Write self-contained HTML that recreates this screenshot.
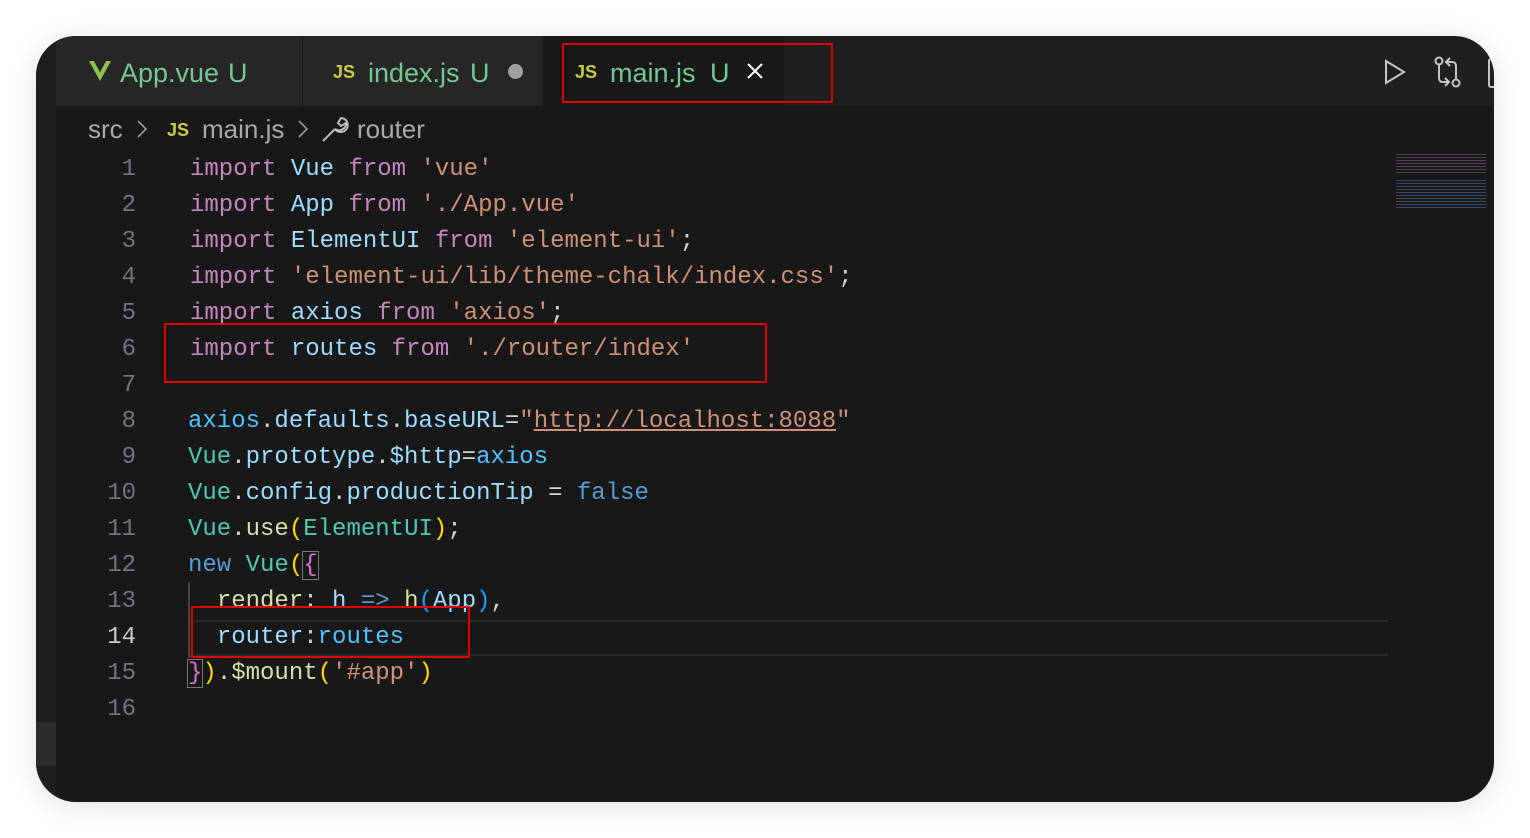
<!DOCTYPE html>
<html><head><style>
body{margin:0;width:1530px;height:838px;background:#fff;overflow:hidden;position:relative;font-family:"Liberation Sans",sans-serif}
.win{position:absolute;left:36px;top:36px;width:1458px;height:766px;background:#181818;border-radius:40px;overflow:hidden;box-shadow:0 4px 30px rgba(0,0,0,.12)}
.tabbar{position:absolute;left:0;top:0;width:1458px;height:70px;background:#1f1f1f}
.tab{position:absolute;top:0;height:70px;background:#262626;border-right:1px solid #1a1a1a;box-sizing:border-box}
.t{position:absolute;font-size:27px;line-height:30px;color:#73c991;white-space:nowrap}
.js{position:absolute;font-family:"Liberation Sans",sans-serif;font-weight:bold;font-size:18px;color:#cbcb41;letter-spacing:0px}
.bc{position:absolute;top:114px;font-size:26px;line-height:30px;color:#a9a9a9;white-space:nowrap}
.mono{font-family:"Liberation Mono",monospace;font-size:24px}
.ln{position:absolute;left:56px;width:80px;text-align:right;color:#6e7681}
.cd{position:absolute;left:190px;white-space:pre;color:#d4d4d4}
.k{color:#c586c0}.v{color:#9cdcfe}.s{color:#ce9178}.c{color:#4ec9b0}.b{color:#569cd6}.y{color:#ffd700}.p{color:#da70d6}.bl{color:#179fff}.f{color:#dcdcaa}.a{color:#4fc1ff}
.red{position:absolute;border:2px solid #e00000;box-sizing:border-box}
.mono > div{margin-top:4px}
</style></head><body>
<div class="win">
<div class="tabbar"></div>
<div style="position:absolute;left:0;top:0;width:20px;height:766px;background:#1e1e1e"></div>
<div style="position:absolute;left:0;top:686px;width:20px;height:44px;background:#2b2b2e"></div>
<div class="tab" style="left:20px;width:247px"></div>
<div class="tab" style="left:267px;width:240px"></div>
<div class="tab" style="left:508px;width:240px;background:#181818"></div>
<svg style="position:absolute;left:1346px;top:22px" width="26" height="28" viewBox="0 0 26 28"><path d="M4 3 L22 14 L4 25 Z" fill="none" stroke="#c5c5c5" stroke-width="2"/></svg>
<svg style="position:absolute;left:1396px;top:20px" width="32" height="32" viewBox="0 0 32 32" fill="none" stroke="#c5c5c5" stroke-width="2"><circle cx="7" cy="5" r="3.5"/><circle cx="24" cy="27" r="3.5"/><path d="M7 9 V22 Q7 26 11 26 H16 M13 22 L17 26 L13 30"/><path d="M24 23 V10 Q24 6 20 6 H15 M18 2 L14 6 L18 10"/></svg>
<div style="position:absolute;left:1452px;top:22px;width:10px;height:26px;border:2px solid #c5c5c5;border-radius:3px"></div>
<div style="position:absolute;left:154px;top:584px;width:1198px;height:32px;border-top:2px solid #282828;border-bottom:2px solid #282828"></div>
<div style="position:absolute;left:152px;top:546px;width:2px;height:76px;background:#444"></div>
<div style="position:absolute;left:1360px;top:116px;width:90px;height:22px;background:repeating-linear-gradient(#181818 0 2px,#7a5a80 2px 3px);opacity:.6"></div>
<div style="position:absolute;left:1360px;top:142px;width:90px;height:32px;background:repeating-linear-gradient(#181818 0 2px,#4a6a90 2px 3px);opacity:.6"></div>
</div>
<svg style="position:absolute;left:88px;top:60px" width="24" height="22" viewBox="0 0 24 22"><path d="M1 1 H6 L12 12 L18 1 H23 L12 21 Z" fill="#8dc149"/><path d="M6 1 H9 L12 7 L15 1 H18 L12 12 Z" fill="#262626"/></svg>
<span class="t" style="left:120px;top:58px">App.vue</span><span class="t" style="left:228px;top:58px">U</span>
<span class="js" style="left:333px;top:62px">JS</span>
<span class="t" style="left:368px;top:58px">index.js</span><span class="t" style="left:470px;top:58px">U</span>
<span style="position:absolute;left:508px;top:64px;width:15px;height:15px;border-radius:50%;background:#a0a0a0"></span>
<span class="js" style="left:575px;top:62px">JS</span>
<span class="t" style="left:610px;top:58px">main.js</span><span class="t" style="left:710px;top:58px">U</span>
<svg style="position:absolute;left:746px;top:62px" width="18" height="18" viewBox="0 0 18 18"><path d="M2 2 L16 16 M16 2 L2 16" stroke="#fff" stroke-width="2"/></svg>
<span class="bc" style="left:88px">src</span>
<svg style="position:absolute;left:136px;top:119px" width="12" height="20" viewBox="0 0 12 20"><path d="M2 2 L10 10 L2 18" fill="none" stroke="#999" stroke-width="1.6"/></svg>
<span class="js" style="left:167px;top:120px">JS</span>
<span class="bc" style="left:202px">main.js</span>
<svg style="position:absolute;left:297px;top:119px" width="12" height="20" viewBox="0 0 12 20"><path d="M2 2 L10 10 L2 18" fill="none" stroke="#999" stroke-width="1.6"/></svg>
<svg style="position:absolute;left:320px;top:114px" width="30" height="30" viewBox="0 0 30 30" fill="none" stroke="#bbb" stroke-width="2"><path d="M3 27 L15 15 M15 15 A7 7 0 1 0 21 4 L18 9 L21 12 L26 9 A7 7 0 0 1 15 15"/></svg>
<span class="bc" style="left:357px">router</span>
<div class="mono">
<div class="ln" style="top:152px">1</div><div class="ln" style="top:188px">2</div><div class="ln" style="top:224px">3</div><div class="ln" style="top:260px">4</div><div class="ln" style="top:296px">5</div><div class="ln" style="top:332px">6</div><div class="ln" style="top:368px">7</div><div class="ln" style="top:404px">8</div><div class="ln" style="top:440px">9</div><div class="ln" style="top:476px">10</div><div class="ln" style="top:512px">11</div><div class="ln" style="top:548px">12</div><div class="ln" style="top:584px">13</div><div class="ln" style="top:620px;color:#ccc">14</div><div class="ln" style="top:656px">15</div><div class="ln" style="top:692px">16</div>
<div class="cd" style="top:152px"><span class="k">import</span> <span class="v">Vue</span> <span class="k">from</span> <span class="s">'vue'</span></div>
<div class="cd" style="top:188px"><span class="k">import</span> <span class="v">App</span> <span class="k">from</span> <span class="s">'./App.vue'</span></div>
<div class="cd" style="top:224px"><span class="k">import</span> <span class="v">ElementUI</span> <span class="k">from</span> <span class="s">'element-ui'</span>;</div>
<div class="cd" style="top:260px"><span class="k">import</span> <span class="s">'element-ui/lib/theme-chalk/index.css'</span>;</div>
<div class="cd" style="top:296px"><span class="k">import</span> <span class="v">axios</span> <span class="k">from</span> <span class="s">'axios'</span>;</div>
<div class="cd" style="top:332px"><span class="k">import</span> <span class="v">routes</span> <span class="k">from</span> <span class="s">'./router/index'</span></div>
<div class="cd" style="top:404px;left:188px"><span class="a">axios</span>.<span class="v">defaults</span>.<span class="v">baseURL</span>=<span class="s">"<u>http://localhost:8088</u>"</span></div>
<div class="cd" style="top:440px;left:188px"><span class="c">Vue</span>.<span class="v">prototype</span>.<span class="v">$http</span>=<span class="a">axios</span></div>
<div class="cd" style="top:476px;left:188px"><span class="c">Vue</span>.<span class="v">config</span>.<span class="v">productionTip</span> = <span class="b">false</span></div>
<div class="cd" style="top:512px;left:188px"><span class="c">Vue</span>.<span class="f">use</span><span class="y">(</span><span class="c">ElementUI</span><span class="y">)</span>;</div>
<div class="cd" style="top:548px;left:188px"><span class="b">new</span> <span class="c">Vue</span><span class="y">(</span><span class="p" style="outline:1px solid #777">{</span></div>
<div class="cd" style="top:584px;left:188px">  <span class="f">render</span>: <span class="v">h</span> <span class="b">=&gt;</span> <span class="f">h</span><span class="bl">(</span><span class="v">App</span><span class="bl">)</span>,</div>
<div class="cd" style="top:620px;left:188px">  <span class="v">router</span>:<span class="a">routes</span></div>
<div class="cd" style="top:656px;left:188px"><span class="p" style="outline:1px solid #777">}</span><span class="y">)</span>.<span class="f">$mount</span><span class="y">(</span><span class="s">'#app'</span><span class="y">)</span></div>
</div>
<div class="red" style="left:562px;top:43px;width:271px;height:60px"></div>
<div class="red" style="left:164px;top:323px;width:603px;height:60px"></div>
<div class="red" style="left:191px;top:606px;width:279px;height:52px"></div>
</body></html>
